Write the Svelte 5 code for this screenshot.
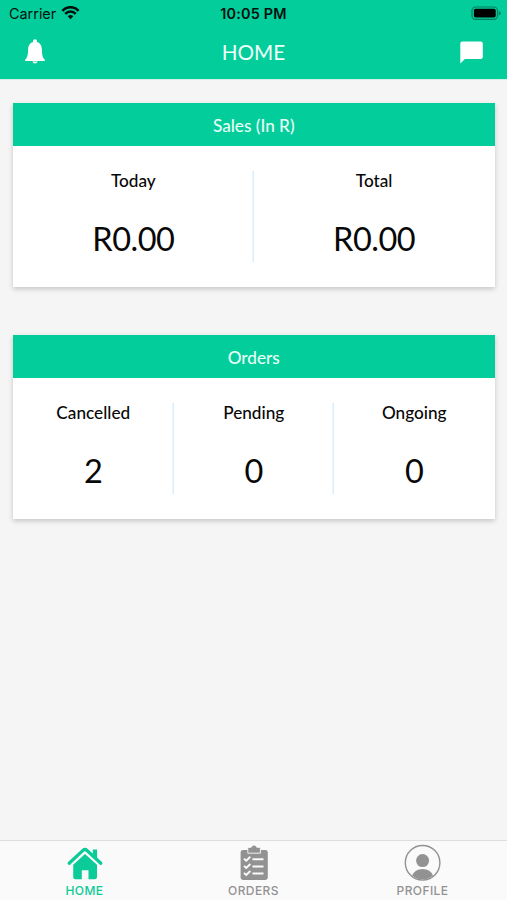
<script>
  const cards = [
    { title: 'Sales (In R)', stats: [['Today', 'R0.00'], ['Total', 'R0.00']] },
    { title: 'Orders', stats: [['Cancelled', '2'], ['Pending', '0'], ['Ongoing', '0']] }
  ];
</script>

<div class="screen">
  <header>
    <div class="status">
      <div class="carrier">
        <span>Carrier</span>
        <svg width="19" height="14" viewBox="0 0 18 14" fill="none" stroke="#03110d" stroke-width="2.6">
          <path d="M0.9 4.8C5.3 0 12.7 0 17.1 4.8" />
          <path d="M3.7 7.8C6.7 4.7 11.3 4.7 14.3 7.8" />
          <path d="M6.2 10.2Q9 7.6 11.8 10.2L9 13.2Z" fill="#03110d" stroke="none" />
        </svg>
      </div>
      <span class="time">10:05 PM</span>
      <div class="battery">
        <svg width="31" height="15" viewBox="0 0 31 15">
          <rect x="1" y="1" width="25.5" height="12.4" rx="3.6" fill="none" stroke="#047f61" stroke-width="1.2" />
          <rect x="2.9" y="2.8" width="21.8" height="8.8" rx="1.8" fill="#000" />
          <path d="M27.8 5Q30 6 30 7.2T27.8 9.4Z" fill="#047f61" />
        </svg>
      </div>
    </div>
    <div class="bar">
      <svg width="20" height="26" viewBox="0 0 20 26" fill="#fff">
        <path d="M10 0.2C11.3 0.2 12 1.1 12 2.3V3C15.4 4 16.8 7 16.9 10.5C17 16 17.6 18.6 19.8 20.6V21.9H0.2V20.6C2.4 18.6 3 16 3.1 10.5C3.2 7 4.6 4 8 3V2.3C8 1.1 8.7 0.2 10 0.2Z" />
        <path d="M7.3 22.5H12.7Q12 24.6 10 24.6T7.3 22.5Z" />
      </svg>
      <h1>HOME</h1>
      <svg width="23" height="23" viewBox="0 0 23 23" fill="#fff">
        <path d="M2.3 0.5H20.7Q22.8 0.5 22.8 2.6V15.9Q22.8 18 20.7 18H4.9L0.3 22.6V2.5Q0.3 0.5 2.3 0.5Z" />
      </svg>
    </div>
  </header>

  <main>
    {#each cards as card}
      <section>
        <h2>{card.title}</h2>
        <div class="stats">
          {#each card.stats as [label, value]}
            <div class="stat">
              <span class="label">{label}</span>
              <span class="value">{value}</span>
            </div>
          {/each}
        </div>
      </section>
    {/each}
  </main>

  <nav>
    <div class="tab active">
      <svg width="38" height="38" viewBox="0 0 38 38">
        <path d="M3.2 19.2L17 6.4Q19 4.6 21 6.4L34.8 19.2" fill="none" stroke="currentColor" stroke-width="3.3" stroke-linecap="round" stroke-linejoin="round" />
        <path d="M26.8 5.5H31.1V14.2L26.8 10.2Z" fill="currentColor" />
        <path d="M7.2 20.8L19 10.1L31 20.8V33Q31 35.3 28.7 35.3H22.5V26.3H15.8V35.3H9.5Q7.2 35.3 7.2 33Z" fill="currentColor" />
      </svg>
      <span>HOME</span>
    </div>
    <div class="tab">
      <svg width="38" height="38" viewBox="0 0 38 38">
        <path d="M8 6H30.4Q32.8 6 32.8 8.4V33.6Q32.8 36 30.4 36H8Q5.6 36 5.6 33.6V8.4Q5.6 6 8 6Z" fill="currentColor" />
        <path d="M12.8 9.2V4.4Q12.8 3.3 14 3.3H16.2Q16.8 1 19 1T21.8 3.3H24.2Q25.4 3.3 25.4 4.4V9.2Z" fill="currentColor" stroke="#fafafa" stroke-width="0.9" />
        <path d="M17.5 15.3H28.5M17.5 22.5H28.5M17.5 29.5H28.5" stroke="#fafafa" stroke-width="1.9" />
        <path d="M9 14.7L11.3 16.7L15.3 12.8M9 21.9L11.3 23.9L15.3 20M9 28.9L11.3 30.9L15.3 27" fill="none" stroke="#fafafa" stroke-width="2" />
      </svg>
      <span>ORDERS</span>
    </div>
    <div class="tab">
      <svg width="38" height="38" viewBox="0 0 38 38">
        <circle cx="18.6" cy="18.8" r="17.3" fill="none" stroke="currentColor" stroke-width="1.4" />
        <circle cx="18.6" cy="16.6" r="6.5" fill="currentColor" />
        <path d="M8.2 31.6Q10.6 24.9 18.6 24.9T29 31.6Q24.6 35.6 18.6 35.6T8.2 31.6Z" fill="currentColor" />
      </svg>
      <span>PROFILE</span>
    </div>
  </nav>
</div>

<style>
  .screen {
    height: 900px;
    display: flex;
    flex-direction: column;
    background: #f5f5f5;
    font-family: Lato, sans-serif;
    color: #080808;
  }
  header {
    height: 80px;
    flex: none;
    box-sizing: border-box;
    background: #03cd9a;
    border-bottom: 1px solid #d5f0e8;
  }
  .status {
    height: 27px;
    display: grid;
    grid-template-columns: 1fr auto 1fr;
    align-items: center;
    font: 14.4px/27px Inter, sans-serif;
    color: #03110d;
  }
  .carrier {
    display: flex;
    align-items: center;
    gap: 5px;
    padding-left: 9px;
  }
  .carrier svg { margin-top: -1px; }
  .time {
    font-weight: 600;
    letter-spacing: 0.2px;
  }
  .battery {
    display: flex;
    justify-content: flex-end;
    padding-right: 5px;
  }
  .bar {
    height: 50px;
    display: flex;
    align-items: center;
    justify-content: space-between;
    padding: 0 24px 0 25px;
  }
  h1 {
    margin: 0 0 0 2px;
    font-size: 20.7px;
    font-weight: 400;
    color: #effffa;
  }
  main {
    flex: 1;
    padding: 23.4px 12.5px 0 13px;
    display: flex;
    flex-direction: column;
    gap: 48.5px;
  }
  section {
    height: 183.5px;
    background: #fff;
    box-shadow: 0 2px 5px rgba(0, 0, 0, 0.2);
  }
  h2 {
    margin: 0;
    height: 43px;
    background: #03cd9a;
    color: #e9fff8;
    font-size: 17.2px;
    line-height: 45px;
    font-weight: 500;
    text-align: center;
  }
  .stats {
    display: flex;
    padding-top: 25px;
  }
  .stat {
    flex: 1;
    height: 91px;
    display: flex;
    flex-direction: column;
    align-items: center;
  }
  .stat + .stat { box-shadow: -1.5px 0 #d9eeff; }
  .label {
    font-size: 17.2px;
    line-height: 20px;
    font-weight: 500;
  }
  .value {
    margin-top: 27px;
    font-size: 32.5px;
    line-height: 42px;
    letter-spacing: -0.5px;
  }
  nav {
    height: 60px;
    box-sizing: border-box;
    border-top: 1.5px solid #dedede;
    background: #fafafa;
    display: flex;
  }
  .tab {
    flex: 1;
    display: flex;
    flex-direction: column;
    align-items: center;
    padding-top: 3px;
    color: #929292;
  }
  .tab.active { color: #0bcb98; }
  .tab span {
    font: 500 12px/15px Inter, sans-serif;
    letter-spacing: 0.4px;
    margin-top: 1px;
  }
</style>
